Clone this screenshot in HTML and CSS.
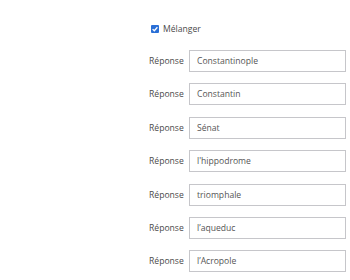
FILE: index.html
```html
<!DOCTYPE html>
<html lang="fr">
<head>
<meta charset="utf-8">
<link rel="stylesheet" href="styles.css">
</head>
<body>
<div class="form">
  <label class="shuffle"><span class="box"><svg viewBox="0 0 8 8" width="8" height="8"><path d="M1.6 4.1 L3.3 5.7 L6.4 2.3" fill="none" stroke="#fff" stroke-width="1.3"/></svg></span>Mélanger</label>
  <div class="row"><span class="lbl">Réponse</span><span class="field">Constantinople</span></div>
  <div class="row"><span class="lbl">Réponse</span><span class="field">Constantin</span></div>
  <div class="row"><span class="lbl">Réponse</span><span class="field">Sénat</span></div>
  <div class="row"><span class="lbl">Réponse</span><span class="field">l'hippodrome</span></div>
  <div class="row"><span class="lbl">Réponse</span><span class="field">triomphale</span></div>
  <div class="row"><span class="lbl">Réponse</span><span class="field">l’aqueduc</span></div>
  <div class="row"><span class="lbl">Réponse</span><span class="field">l’Acropole</span></div>
</div>
</body>
</html>
```
FILE: styles.css
```css
html, body { margin: 0; padding: 0; background: #fff; }
body { font-family: "Open Sans", "Noto Sans", sans-serif; font-size: 8.6px; color: #4a4a4a; }
.form { padding: 23px 0 0 149px; display: flex; flex-direction: column; align-items: flex-start; }
.shuffle { display: flex; align-items: center; gap: 4px; height: 12px; margin-bottom: 15px; }
.box { width: 8px; height: 8px; background: #2a6fd6; border-radius: 1px; display: flex; margin-left: 2px; }
.row { display: flex; align-items: center; margin-bottom: 11.4px; }
.lbl { width: 40px; }
.field { box-sizing: border-box; width: 157px; height: 22px; border: 1px solid #c6c6ca; padding: 0 7px; display: flex; align-items: center; color: #555; }
```
